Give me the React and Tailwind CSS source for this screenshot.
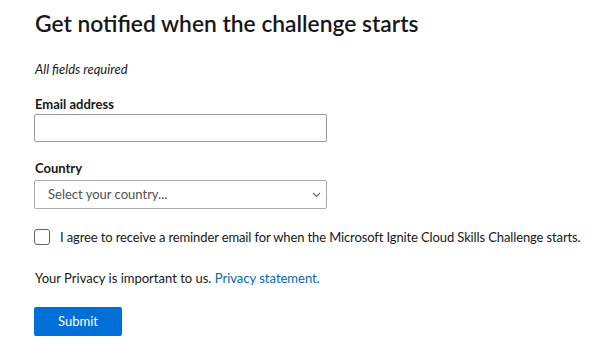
import React from 'react'

export default function App(){
  return (
    <div className="w-[606px] h-[344px] bg-white overflow-hidden text-[#171717]" style={{fontFamily: 'Lato, "Liberation Sans", sans-serif'}}>
      <div className="pl-[35px] pt-[7px]">
        <h1 className="text-[22.8px] leading-[32px] font-semibold">Get notified when the challenge starts</h1>
        <p className="mt-[21px] text-[13px] italic leading-[18px]">All fields required</p>

        <label className="block mt-[17px] text-[13px] font-bold leading-[18px]">Email address</label>
        <input type="text" className="block mt-[1px] -ml-px w-[293px] h-[28px] border border-[#999] rounded-[2px] outline-none" />

        <label className="block mt-[17px] text-[13px] font-bold leading-[18px]">Country</label>
        <div className="relative mt-[3px] -ml-px w-[293px] h-[29px] border border-[#aaa] rounded-[2px] flex items-center">
          <span className="pl-[13px] text-[13px] text-[#505050]">Select your country...</span>
          <svg className="absolute right-[5px] top-[11px]" width="9" height="6" viewBox="0 0 9 6" fill="none">
            <path d="M1 1l3.5 3.5L8 1" stroke="#666" strokeWidth="1.1" />
          </svg>
        </div>

        <div className="flex items-center mt-[19px] -ml-px">
          <span className="w-[16px] h-[16px] border border-[#666] rounded-[3px] shrink-0" />
          <span className="ml-[10px] text-[13px] tracking-[-0.12px] leading-[18px] whitespace-nowrap">I agree to receive a reminder email for when the Microsoft Ignite Cloud Skills Challenge starts.</span>
        </div>

        <p className="mt-[23px] text-[13px] leading-[18px]">Your Privacy is important to us. <a className="text-[#0067b8]">Privacy statement.</a></p>

        <button className="block mt-[20px] -ml-px w-[88px] h-[29px] bg-[#0070d8] text-white text-[13px] rounded-[2px]">Submit</button>
      </div>
    </div>
  )
}
